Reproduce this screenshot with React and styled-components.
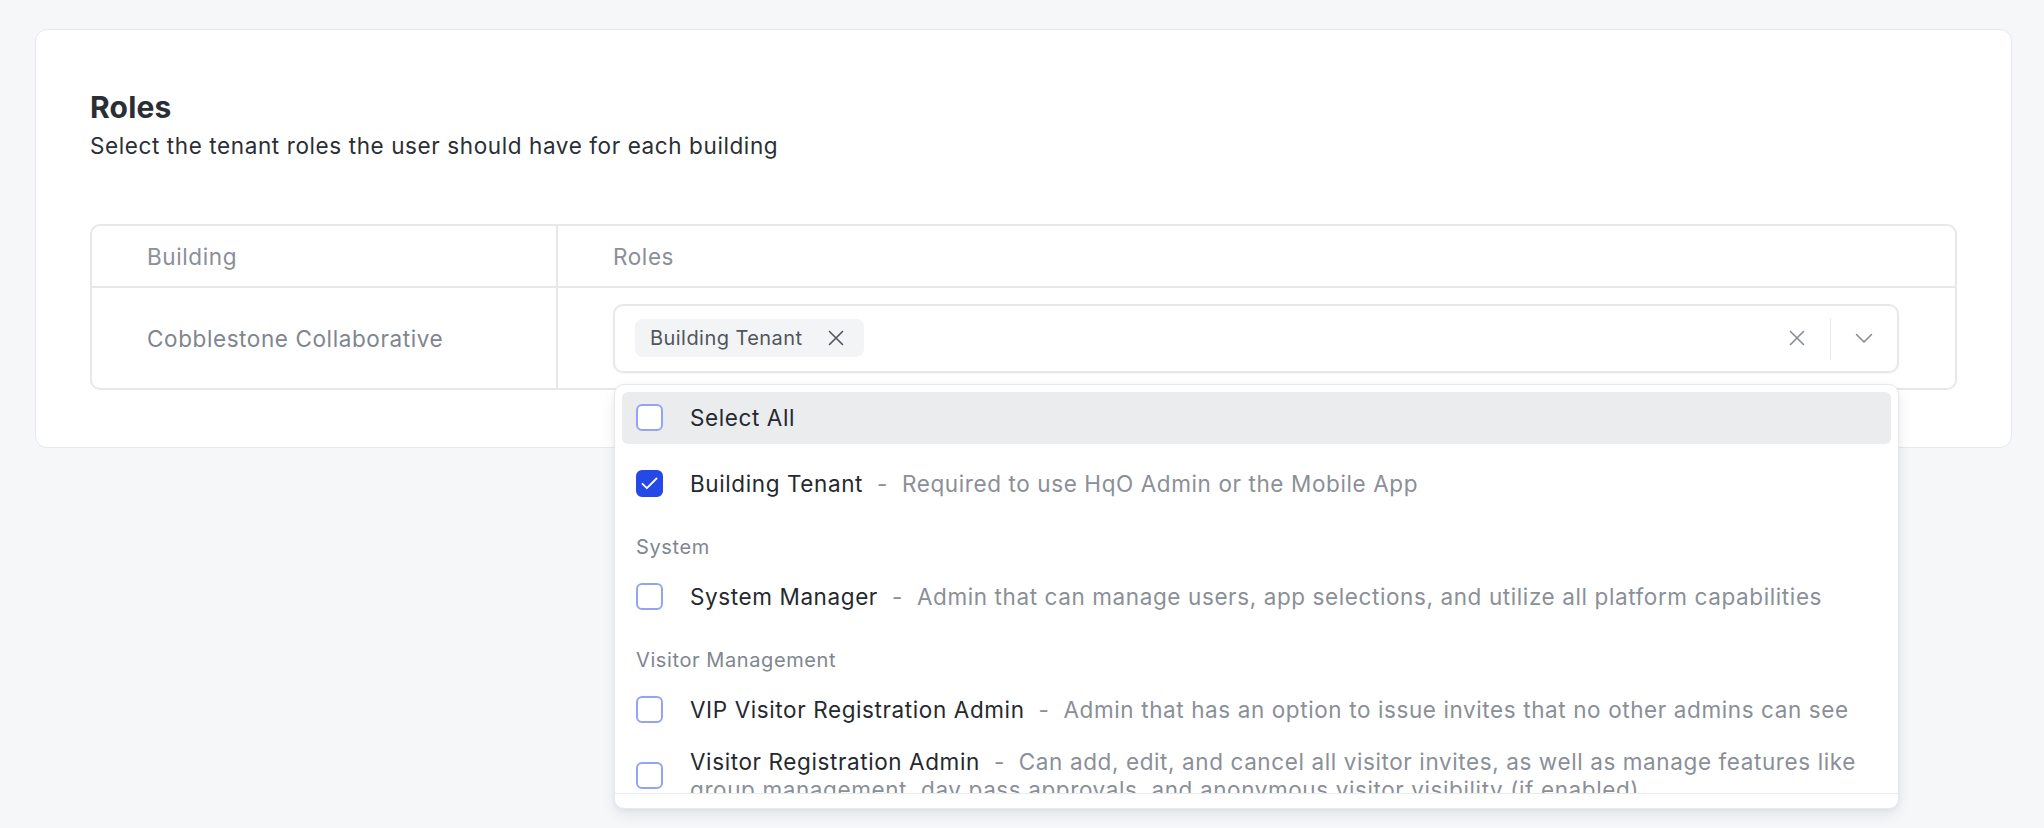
import React from "react";
import styled, { createGlobalStyle } from "styled-components";

const GlobalStyle = createGlobalStyle`
  html, body {
    margin: 0;
    padding: 0;
  }
  body {
    background: #f6f7f9;
    font-family: Inter, "Noto Sans", sans-serif;
    color: #2b2f36;
    -webkit-font-smoothing: antialiased;
  }
`;

const Page = styled.div`
  box-sizing: border-box;
  height: 828px;
  padding: 29px 32px 0 35px;
`;

const Card = styled.section`
  box-sizing: border-box;
  width: 1977px;
  background: #fff;
  border: 1.5px solid #e6e8eb;
  border-radius: 12px;
  padding: 59px 54px 57px;
`;

const Title = styled.h2`
  margin: 0;
  font-size: 30px;
  line-height: 36px;
  font-weight: 700;
  letter-spacing: 0.2px;
  color: #2a2e35;
`;

const Subtitle = styled.p`
  margin: 7px 0 0;
  font-size: 22.5px;
  line-height: 28px;
  letter-spacing: 0.6px;
  color: #2a2e35;
`;

const Table = styled.div`
  margin-top: 64px;
  display: grid;
  grid-template-columns: 464px 1fr;
  border: 2px solid #e6e8eb;
  border-radius: 10px;
`;

const HeadCell = styled.div`
  height: 60px;
  display: flex;
  align-items: center;
  padding-left: 55px;
  font-size: 22.5px;
  letter-spacing: 0.6px;
  color: #8a8f98;
  border-bottom: 2px solid #e6e8eb;
  border-left: ${(p) => (p.$divider ? "2px solid #e6e8eb" : "none")};
`;

const BodyCell = styled.div`
  box-sizing: border-box;
  height: 100px;
  display: flex;
  align-items: center;
  padding: 0 56px 0 55px;
  font-size: 22.5px;
  letter-spacing: 0.6px;
  color: #80868f;
  border-left: ${(p) => (p.$divider ? "2px solid #e6e8eb" : "none")};
`;

const Combo = styled.div`
  position: relative;
  box-sizing: border-box;
  flex: 1;
  height: 69px;
  display: flex;
  align-items: center;
  padding-left: 20px;
  border: 2px solid #e6e8eb;
  border-radius: 10px;
  box-shadow: 0 1px 2px rgba(16, 24, 40, 0.04);
`;

const Chip = styled.span`
  display: inline-flex;
  align-items: center;
  gap: 25px;
  height: 38px;
  padding: 0 20px 0 15px;
  border-radius: 8px;
  background: #f3f4f6;
  font-size: 20px;
  letter-spacing: 0.45px;
  color: #50555d;
`;

const Spacer = styled.div`
  flex: 1;
`;

const IconButton = styled.span`
  width: 66px;
  height: 100%;
  display: flex;
  align-items: center;
  justify-content: center;
  color: #878c95;
`;

const Divider = styled.span`
  width: 1.5px;
  height: 41px;
  background: #e6e8eb;
`;

const Menu = styled.div`
  position: absolute;
  top: calc(100% + 13px);
  left: -1px;
  right: -2px;
  z-index: 10;
  height: 425px;
  box-sizing: border-box;
  display: flex;
  flex-direction: column;
  background: #fff;
  border: 1.5px solid #e6e8eb;
  border-radius: 10px;
  box-shadow: 0 6px 14px rgba(16, 24, 40, 0.08), 0 2px 4px rgba(16, 24, 40, 0.04);
`;

const List = styled.div`
  flex: 1;
  overflow: hidden;
  padding: 7px 7px 0;
`;

const MenuFooter = styled.div`
  height: 14px;
  border-top: 1.5px solid #e9ebee;
`;

const Option = styled.div`
  display: flex;
  align-items: center;
  gap: 27px;
  padding: 12px 14px;
  border-radius: 6px;
  background: ${(p) => (p.$active ? "#ebecee" : "transparent")};
  margin-bottom: ${(p) => (p.$gap ? "14px" : "0")};
`;

const OptionText = styled.div`
  font-size: 22.5px;
  line-height: 28px;
  letter-spacing: 0.6px;
  color: #25292f;
`;

const Dash = styled.span`
  color: #8a8f98;
  margin: 0 14px;
`;

const Desc = styled.span`
  color: #8a8f98;
`;

const GroupLabel = styled.div`
  padding: 25px 14px 12px;
  font-size: 20px;
  line-height: 24px;
  letter-spacing: 0.6px;
  color: #80868f;
`;

const Box = styled.span`
  box-sizing: border-box;
  flex-shrink: 0;
  width: 27px;
  height: 27px;
  display: flex;
  align-items: center;
  justify-content: center;
  border-radius: 6px;
  border: 2px solid ${(p) => (p.$checked ? "#2449e6" : "#93a3f5")};
  background: ${(p) => (p.$checked ? "#2449e6" : "#fff")};
`;

const XIcon = ({ size = 16 }) => (
  <svg width={size} height={size} viewBox="0 0 16 16" fill="none">
    <path d="M1.5 1.5l13 13M14.5 1.5l-13 13" stroke="currentColor" strokeWidth="1.6" strokeLinecap="round" />
  </svg>
);

const ChevronIcon = () => (
  <svg width="18" height="11" viewBox="0 0 18 11" fill="none">
    <path d="M1.5 1.5l7.5 7.5 7.5-7.5" stroke="currentColor" strokeWidth="1.6" strokeLinecap="round" strokeLinejoin="round" />
  </svg>
);

const Checkbox = ({ checked }) => (
  <Box $checked={checked}>
    {checked && (
      <svg width="17" height="13" viewBox="0 0 17 13" fill="none">
        <path d="M1.5 6.8l4.4 4.4L15.5 1.5" stroke="#fff" strokeWidth="1.8" strokeLinecap="round" strokeLinejoin="round" />
      </svg>
    )}
  </Box>
);

const groups = [
  {
    roles: [{ name: "Building Tenant", desc: "Required to use HqO Admin or the Mobile App", checked: true }],
  },
  {
    label: "System",
    roles: [{ name: "System Manager", desc: "Admin that can manage users, app selections, and utilize all platform capabilities" }],
  },
  {
    label: "Visitor Management",
    roles: [
      { name: "VIP Visitor Registration Admin", desc: "Admin that has an option to issue invites that no other admins can see" },
      {
        name: "Visitor Registration Admin",
        desc: "Can add, edit, and cancel all visitor invites, as well as manage features like group management, day pass approvals, and anonymous visitor visibility (if enabled)",
      },
    ],
  },
];

const RoleOption = ({ role }) => (
  <Option>
    <Checkbox checked={role.checked} />
    <OptionText>
      {role.name}
      <Dash>-</Dash>
      <Desc>{role.desc}</Desc>
    </OptionText>
  </Option>
);

export default function App() {
  return (
    <>
      <GlobalStyle />
      <Page>
        <Card>
          <Title>Roles</Title>
          <Subtitle>Select the tenant roles the user should have for each building</Subtitle>
          <Table>
            <HeadCell>Building</HeadCell>
            <HeadCell $divider>Roles</HeadCell>
            <BodyCell>Cobblestone Collaborative</BodyCell>
            <BodyCell $divider>
              <Combo>
                <Chip>
                  Building Tenant
                  <XIcon size={16} />
                </Chip>
                <Spacer />
                <IconButton>
                  <XIcon size={16} />
                </IconButton>
                <Divider />
                <IconButton>
                  <ChevronIcon />
                </IconButton>
                <Menu>
                  <List>
                    <Option $active $gap>
                      <Checkbox />
                      <OptionText>Select All</OptionText>
                    </Option>
                    {groups.map((g, i) => (
                      <React.Fragment key={i}>
                        {g.label && <GroupLabel>{g.label}</GroupLabel>}
                        {g.roles.map((r) => (
                          <RoleOption key={r.name} role={r} />
                        ))}
                      </React.Fragment>
                    ))}
                  </List>
                  <MenuFooter />
                </Menu>
              </Combo>
            </BodyCell>
          </Table>
        </Card>
      </Page>
    </>
  );
}
